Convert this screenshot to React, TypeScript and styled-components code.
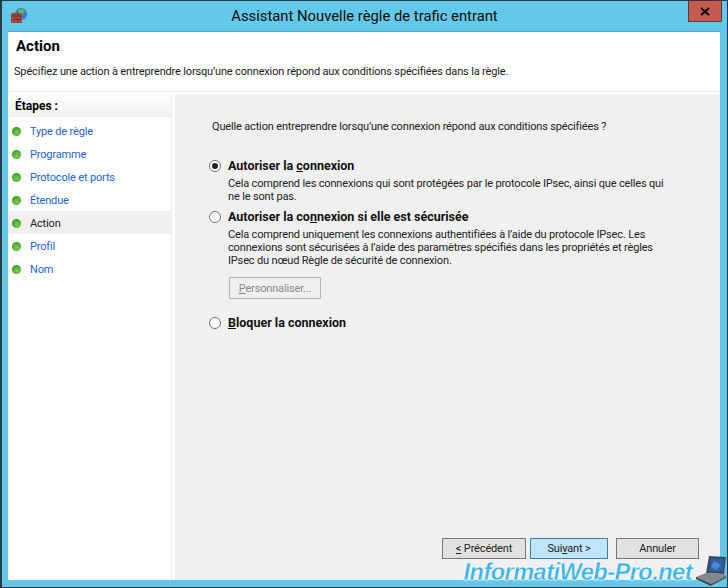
import React from 'react'
import styled, { createGlobalStyle } from 'styled-components'

const GlobalStyle = createGlobalStyle`
  html, body {
    margin: 0;
    padding: 0;
    background: #63c8e9;
  }
  * {
    box-sizing: border-box;
  }
`

const Window = styled.div`
  position: relative;
  width: 728px;
  height: 588px;
  display: flex;
  flex-direction: column;
  background: #63c8e9;
  border: 1px solid #2c3a46;
  border-left-width: 2px;
  font-family: Roboto, 'Liberation Sans', Arial, sans-serif;
  font-size: 11px;
  letter-spacing: -0.16px;
  color: #111;
  overflow: hidden;
`

const TitleBar = styled.div`
  height: 30px;
  flex-shrink: 0;
  display: flex;
  align-items: center;
  position: relative;
`

const AppIcon = styled.svg`
  width: 18px;
  height: 18px;
  margin-left: 8px;
`

const Title = styled.div`
  position: absolute;
  left: 0;
  right: 0;
  top: 6px;
  text-align: center;
  font-size: 14.8px;
  letter-spacing: normal;
  line-height: 18px;
  color: #0c0c0c;
`

const CloseButton = styled.div`
  position: absolute;
  top: -1px;
  right: 5px;
  width: 34px;
  height: 22px;
  background: #c75a50;
  border: 1px solid #5c3a3c;
  display: flex;
  align-items: center;
  justify-content: center;
`

const Client = styled.div`
  flex: 1;
  margin: 0 7px 7px 6px;
  display: flex;
  flex-direction: column;
  background: #fff;
  border-top: 1px solid #58a9c6;
  min-height: 0;
`

const Header = styled.div`
  height: 60px;
  flex-shrink: 0;
  padding: 5px 0 0 8px;
  border-bottom: 1px solid #eee;
`

const HeaderTitle = styled.div`
  font-weight: bold;
  font-size: 15px;
  letter-spacing: normal;
  line-height: 18px;
  color: #000;
`

const HeaderText = styled.div`
  margin-top: 9px;
  margin-left: -2px;
  line-height: 15px;
  color: #1a1a1a;
`

const Body = styled.div`
  flex: 1;
  display: flex;
  min-height: 0;
  padding-top: 2px;
`

const Sidebar = styled.div`
  width: 164px;
  flex-shrink: 0;
  margin-right: 3px;
  border-right: 1px solid #eee;
`

const SidebarHeader = styled.div`
  height: 23px;
  padding-left: 7px;
  display: flex;
  align-items: center;
  font-weight: bold;
  font-size: 12px;
  letter-spacing: normal;
  background: linear-gradient(#fff, #f1f1f1);
  color: #000;
  margin-bottom: 2px;
`

const StepRow = styled.div<{ $active?: boolean }>`
  height: 23px;
  width: 163px;
  display: flex;
  align-items: center;
  padding: 2px 0 0 4px;
  gap: 9px;
  background: ${({ $active }) => ($active ? '#f0f0f0' : 'transparent')};
  color: ${({ $active }) => ($active ? '#222' : '#1c62d8')};
`

const Bullet = styled.span`
  width: 9px;
  height: 9px;
  border-radius: 50%;
  flex-shrink: 0;
  background: radial-gradient(circle at 55% 65%, #7ed04c, #3f9f2a 70%, #8fbf80);
`

const Content = styled.div`
  flex: 1;
  min-width: 0;
  display: flex;
  flex-direction: column;
  background: #f0f0f0;
  padding: 25px 21px 21px 34px;
`

const Question = styled.div`
  margin-left: 3px;
  line-height: 15px;
  color: #222;
`

const OptionRow = styled.div<{ $gap: number }>`
  display: flex;
  align-items: center;
  gap: 7px;
  margin-top: ${({ $gap }) => $gap}px;
  height: 15px;
`

const Radio = styled.span<{ $checked?: boolean }>`
  width: 12px;
  height: 12px;
  border-radius: 50%;
  border: 1px solid #707070;
  background: #fff;
  flex-shrink: 0;
  display: flex;
  align-items: center;
  justify-content: center;
  &::after {
    content: '';
    width: 6px;
    height: 6px;
    border-radius: 50%;
    background: ${({ $checked }) => ($checked ? '#222' : 'transparent')};
  }
`

const OptionLabel = styled.span`
  font-weight: bold;
  font-size: 12.5px;
  letter-spacing: normal;
  color: #111;
`

const OptionText = styled.div`
  margin: 4px 0 0 19px;
  line-height: 13px;
  color: #222;
  white-space: nowrap;
`

const CustomButton = styled.div`
  width: 92px;
  height: 22px;
  margin: 10px 0 0 20px;
  border: 1px solid #b5b5b5;
  display: flex;
  align-items: center;
  justify-content: center;
  color: #8a8a8a;
  background: #efefef;
`

const Footer = styled.div`
  margin-top: auto;
  display: flex;
  justify-content: flex-end;
`

const WizardButton = styled.div<{ $primary?: boolean; $width: number; $gap: number }>`
  width: ${({ $width }) => $width}px;
  height: 21px;
  margin-left: ${({ $gap }) => $gap}px;
  display: flex;
  align-items: center;
  justify-content: center;
  color: #222;
  border: 1px solid ${({ $primary }) => ($primary ? '#3c7fb1' : '#777')};
  background: ${({ $primary }) => ($primary ? '#bfe4fb' : '#e1e1e1')};
`

const Watermark = styled.div`
  position: absolute;
  right: 35px;
  bottom: 1px;
  font-family: 'Liberation Sans', Arial, sans-serif;
  font-size: 23.5px;
  line-height: 28px;
  font-weight: bold;
  font-style: italic;
  color: #3cb4ea;
  letter-spacing: -0.5px;
  -webkit-text-stroke: 0.3px #fff;
  text-shadow: 0 0 2px #fff;
`

const Laptop = styled.svg`
  position: absolute;
  right: 0;
  bottom: 0;
  width: 39px;
  height: 39px;
`

const steps = ['Type de règle', 'Programme', 'Protocole et ports', 'Étendue', 'Action', 'Profil', 'Nom']

const App = () => {
  return (
    <>
      <GlobalStyle />
      <Window>
        <TitleBar>
          <AppIcon viewBox="0 0 18 18">
            <circle cx="11" cy="7" r="6" fill="#2f7fd0" />
            <path d="M8 3c3-2 6-1 7 2l-3 2-3-1z" fill="#5fbf4a" />
            <rect x="1" y="6" width="11" height="10" fill="#a5503f" />
            <path d="M1 9h11M1 12.500h11M4 6v3M8 6v3M6 9v3.500M10 9v3.500M4 12.500V16M8 12.500V16" stroke="#6e2f25" strokeWidth="0.8" />
          </AppIcon>
          <Title>Assistant Nouvelle règle de trafic entrant</Title>
          <CloseButton>
            <svg width="10" height="9" viewBox="0 0 10 9">
              <path d="M1 1l8 7M9 1L1 8" stroke="#000" strokeWidth="2.2" />
            </svg>
          </CloseButton>
        </TitleBar>
        <Client>
          <Header>
            <HeaderTitle>Action</HeaderTitle>
            <HeaderText>Spécifiez une action à entreprendre lorsqu’une connexion répond aux conditions spécifiées dans la règle.</HeaderText>
          </Header>
          <Body>
            <Sidebar>
              <SidebarHeader>Étapes :</SidebarHeader>
              {steps.map((step) => (
                <StepRow key={step} $active={step === 'Action'}>
                  <Bullet />
                  {step}
                </StepRow>
              ))}
            </Sidebar>
            <Content>
              <Question>Quelle action entreprendre lorsqu’une connexion répond aux conditions spécifiées ?</Question>
              <OptionRow $gap={24}>
                <Radio $checked />
                <OptionLabel>Autoriser la <u>c</u>onnexion</OptionLabel>
              </OptionRow>
              <OptionText>
                Cela comprend les connexions qui sont protégées par le protocole IPsec, ainsi que celles qui
                <br />
                ne le sont pas.
              </OptionText>
              <OptionRow $gap={6}>
                <Radio />
                <OptionLabel>Autoriser la co<u>n</u>nexion si elle est sécurisée</OptionLabel>
              </OptionRow>
              <OptionText>
                Cela comprend uniquement les connexions authentifiées à l’aide du protocole IPsec. Les
                <br />
                connexions sont sécurisées à l’aide des paramètres spécifiés dans les propriétés et règles
                <br />
                IPsec du nœud Règle de sécurité de connexion.
              </OptionText>
              <CustomButton><span><u>P</u>ersonnaliser...</span></CustomButton>
              <OptionRow $gap={16}>
                <Radio />
                <OptionLabel><u>B</u>loquer la connexion</OptionLabel>
              </OptionRow>
              <Footer>
                <WizardButton $width={84} $gap={0}><span><u>&lt;</u> Précédent</span></WizardButton>
                <WizardButton $width={78} $gap={4} $primary><span>Sui<u>v</u>ant &gt;</span></WizardButton>
                <WizardButton $width={83} $gap={8}>Annuler</WizardButton>
              </Footer>
            </Content>
          </Body>
        </Client>
        <Watermark>InformatiWeb-Pro.net</Watermark>
        <Laptop viewBox="0 0 39 39">
          <path d="M21 8l17 1-2 17-18-1z" fill="#3a4a5c" />
          <path d="M23 10l13 1-1.500 13-14-1z" fill="#2a5fa8" />
          <path d="M26 13l7 4-5 5-5-3z" fill="#4f86c8" />
          <path d="M18 25l18 1 2 2-15 8-15-7z" fill="#83888c" />
          <path d="M8 29l15 7v2L8 31z" fill="#3f4448" />
          <path d="M23 36l15-8v2l-15 8z" fill="#565b60" />
        </Laptop>
      </Window>
    </>
  )
}

export default App
